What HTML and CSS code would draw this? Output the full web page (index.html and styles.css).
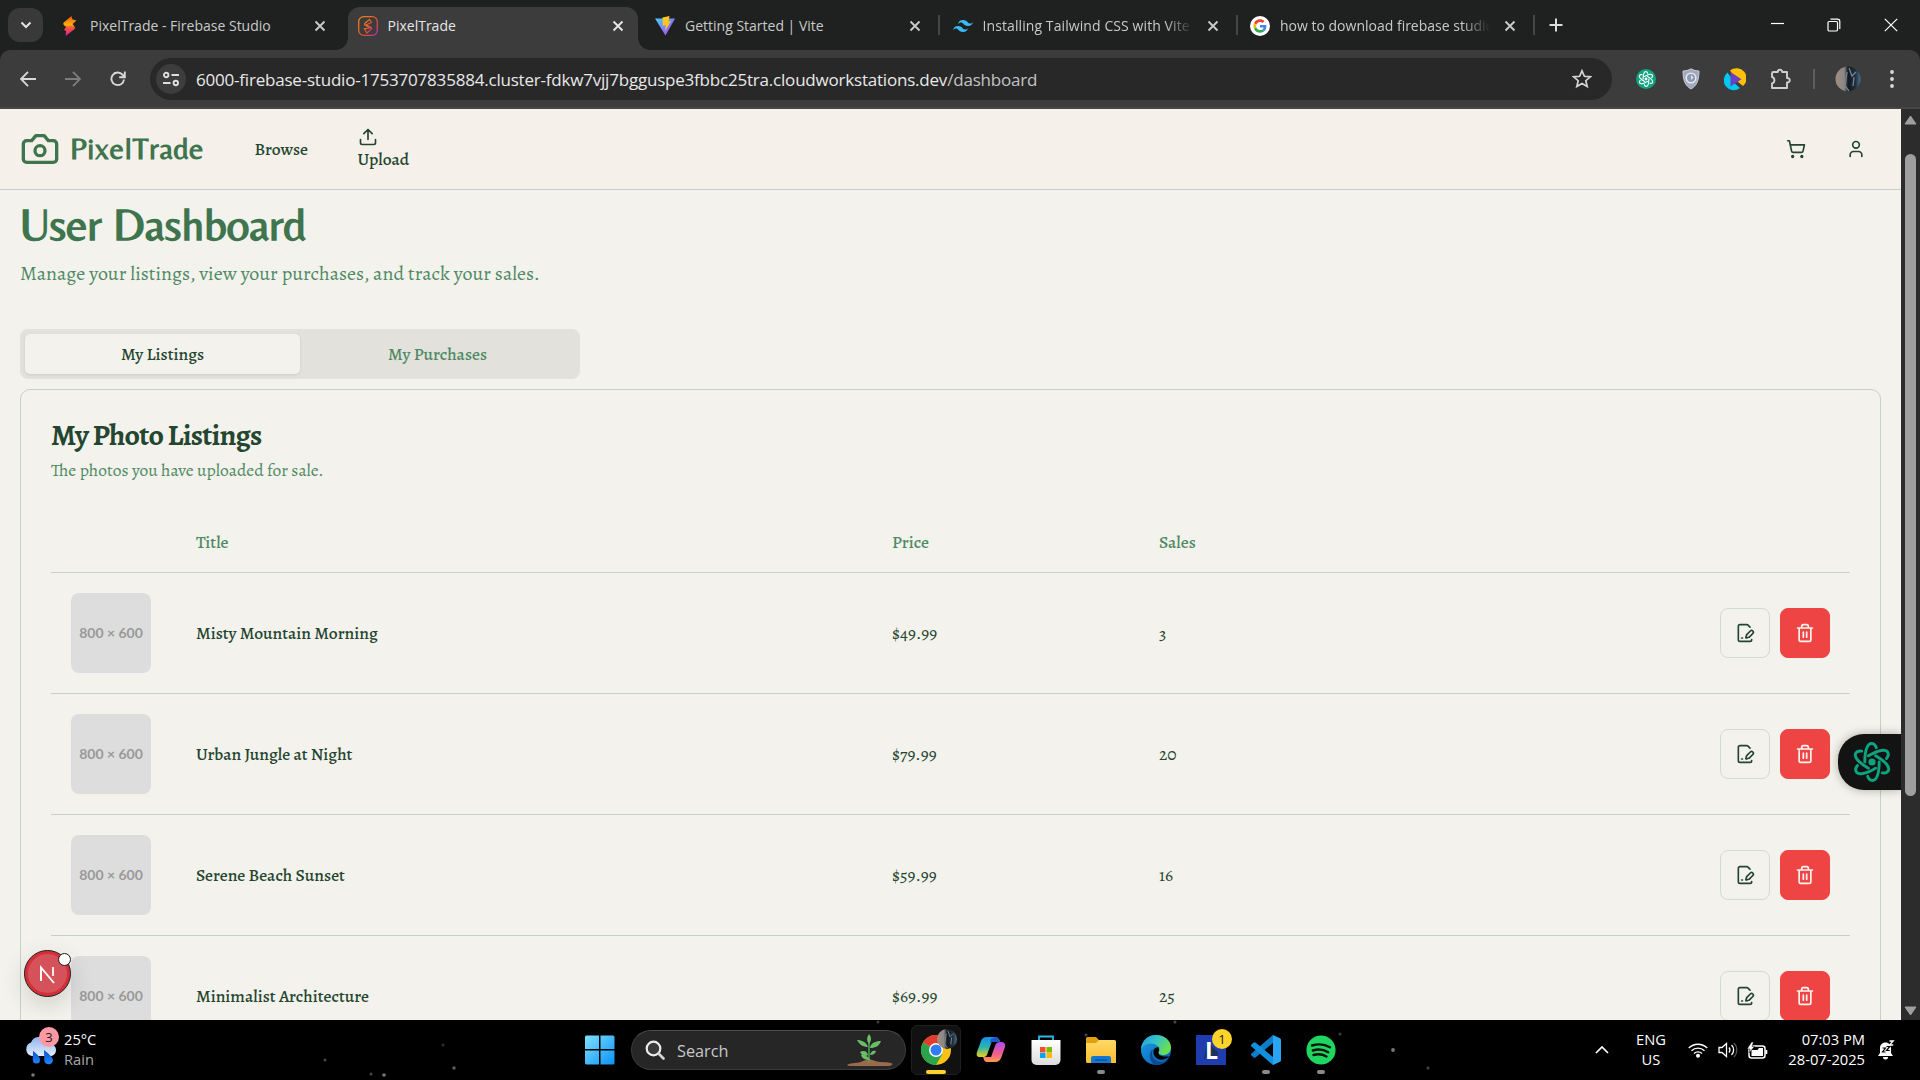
FILE: index.html
```html
<!DOCTYPE html>
<html lang="en">
<head>
<meta charset="utf-8">
<title>PixelTrade</title>
<link rel="stylesheet" href="styles.css">
</head>
<body>
<svg class="defs" width="0" height="0" aria-hidden="true">
  <defs>
    <linearGradient id="fire" x1="0" y1="0" x2="0" y2="1"><stop offset="0" stop-color="#f4511e"/><stop offset=".45" stop-color="#ffb300"/><stop offset=".55" stop-color="#ff5a36"/><stop offset="1" stop-color="#d81b9a"/></linearGradient>
    <linearGradient id="ring" x1="0" y1="0" x2="1" y2="1"><stop offset="0" stop-color="#f08a1c"/><stop offset=".6" stop-color="#e0502d"/><stop offset="1" stop-color="#c02fb0"/></linearGradient>
    <linearGradient id="viteA" x1="0" y1="0" x2="1" y2="1"><stop offset="0" stop-color="#41d1ff"/><stop offset="1" stop-color="#bd34fe"/></linearGradient>
    <linearGradient id="win" x1="0" y1="0" x2="1" y2="1"><stop offset="0" stop-color="#7fe0ff"/><stop offset="1" stop-color="#0a93f5"/></linearGradient>
    <linearGradient id="cloud" x1="0" y1="0" x2="0" y2="1"><stop offset="0" stop-color="#8fb4f0"/><stop offset="1" stop-color="#e3ecfb"/></linearGradient>
    <linearGradient id="drop" x1="0" y1="0" x2="0" y2="1"><stop offset="0" stop-color="#0b4fd0"/><stop offset="1" stop-color="#1e86ff"/></linearGradient>
    <linearGradient id="copA" x1="0" y1="0" x2="0" y2="1"><stop offset="0" stop-color="#1a8fe8"/><stop offset=".5" stop-color="#27b5b0"/><stop offset="1" stop-color="#f2cf1f"/></linearGradient>
    <linearGradient id="copB" x1="0" y1="0" x2="0" y2="1"><stop offset="0" stop-color="#b04bf0"/><stop offset=".6" stop-color="#f0608a"/><stop offset="1" stop-color="#ff9a4d"/></linearGradient>
    <linearGradient id="folder" x1="0" y1="0" x2="0" y2="1"><stop offset="0" stop-color="#ffd967"/><stop offset="1" stop-color="#fdbf2d"/></linearGradient>
    <linearGradient id="edgeA" x1="0" y1="0" x2="1" y2=".5"><stop offset="0" stop-color="#1b9de2"/><stop offset=".5" stop-color="#35c1c9"/><stop offset="1" stop-color="#6be04c"/></linearGradient>
    <linearGradient id="edgeB" x1="0" y1="0" x2="1" y2="1"><stop offset="0" stop-color="#1aa0e8"/><stop offset="1" stop-color="#0b57b0"/></linearGradient>
    <linearGradient id="store" x1="0" y1="0" x2="0" y2="1"><stop offset="0" stop-color="#fff"/><stop offset="1" stop-color="#dcdcdc"/></linearGradient>
    <linearGradient id="face" x1="0" y1="0" x2="1" y2="0"><stop offset="0" stop-color="#a08d80"/><stop offset=".35" stop-color="#8b8784"/><stop offset=".5" stop-color="#15181c"/><stop offset=".8" stop-color="#22303c"/><stop offset="1" stop-color="#4d7394"/></linearGradient>
    <symbol id="close" viewBox="0 0 12 12"><path d="M1.5 1.5l9 9M10.500 1.500l-9 9" fill="none" stroke="currentColor" stroke-width="1.9"/></symbol>
    <symbol id="edit" viewBox="0 0 24 24"><path d="m18 5-2.414-2.414A2 2 0 0 0 14.172 2H6a2 2 0 0 0-2 2v16a2 2 0 0 0 2 2h12a2 2 0 0 0 2-2"/><path d="M21.378 12.626a1 1 0 0 0-3.004-3.004l-4.010 4.012a2 2 0 0 0-.506.854l-.837 2.870a.5.5 0 0 0 .620.620l2.870-.837a2 2 0 0 0 .854-.506z"/><path d="M8 18h1"/></symbol>
    <symbol id="trash" viewBox="0 0 24 24"><path d="M3 6h18M19 6v14c0 1-1 2-2 2H7c-1 0-2-1-2-2V6M8 6V4c0-1 1-2 2-2h4c1 0 2 1 2 2v2M10 11v6M14 11v6"/></symbol>
    <symbol id="atom" viewBox="0 0 40 40">
      <g fill="none" stroke="currentColor" stroke-width="2.9" stroke-linecap="round">
        <g id="petal"><path d="M12.800 20C12.800 8 15.500 1.500 19.500 1.500c2.300 0 3.900 1.600 4.800 4.200"/></g>
        <use href="#petal" transform="rotate(60 20 20)"/><use href="#petal" transform="rotate(120 20 20)"/><use href="#petal" transform="rotate(180 20 20)"/><use href="#petal" transform="rotate(240 20 20)"/><use href="#petal" transform="rotate(300 20 20)"/>
      </g><circle cx="20" cy="20" r="3.600" fill="currentColor"/></symbol>
  </defs>
</svg>

<div class="screen">
  <div class="tabstrip">
    <div class="tabsearch"><svg width="12" height="8" viewBox="0 0 12 8"><path d="M1.500 1.500L6 6l4.500-4.500" fill="none" stroke="#e3e3e3" stroke-width="2"/></svg></div>
    <div class="tab">
      <svg class="fav" viewBox="0 0 20 20"><path d="M11.500 0L4 6.200c-.8.700-.9 2-.2 2.800L6 11l-2 3 2 1-.3 5 8.300-6.500c1.200-1 1.300-2 .5-3L12.500 8l4-3.500-4.200-1.300z" fill="url(#fire)"/></svg>
      <span class="tabname">PixelTrade - Firebase Studio</span><svg class="x"><use href="#close"/></svg>
    </div>
    <div class="tab on">
      <svg class="fav" viewBox="0 0 20 20"><rect x=".7" y=".7" width="18.600" height="18.600" rx="5" fill="none" stroke="url(#ring)" stroke-width="1.300"/><path d="M11.500 3.500L7 7.300c-.6.600-.6 1.200 0 1.700l5 3-5.500.8L9 17l4-3.600c.7-.7.700-1.600 0-2.200L8 9l5.500-2.500z" fill="none" stroke="url(#ring)" stroke-width="1.200"/></svg>
      <span class="tabname">PixelTrade</span><svg class="x"><use href="#close"/></svg>
    </div>
    <div class="tab sep">
      <svg class="fav" viewBox="0 0 20 20"><path d="M0 2.500L20 2.500 10.500 19.500z" fill="url(#viteA)"/><path d="M7.500 1.500L14.500 0l-1 5.500 2.500-.5-6 10 .8-6-3 .7z" fill="#ffc61c"/></svg>
      <span class="tabname">Getting Started | Vite</span><svg class="x"><use href="#close"/></svg>
    </div>
    <div class="tab sep">
      <svg class="fav" viewBox="0 0 20 20"><path d="M5 8c.7-2.700 2.300-4 5-4 4 0 4.500 3 6.500 3.500 1.300.3 2.500-.2 3.500-1.500-.7 2.700-2.300 4-5 4-4 0-4.500-3-6.500-3.500C7.200 6.200 6 6.700 5 8zM0 14c.7-2.700 2.300-4 5-4 4 0 4.500 3 6.500 3.500 1.300.3 2.500-.2 3.500-1.500-.7 2.700-2.300 4-5 4-4 0-4.500-3-6.500-3.500C2.200 12.200 1 12.700 0 14z" fill="#38bdf8"/></svg>
      <span class="tabname fade wide">Installing Tailwind CSS with Vite</span><svg class="x"><use href="#close"/></svg>
    </div>
    <div class="tab sep">
      <svg class="fav" viewBox="-12 -12 72 72"><circle cx="24" cy="24" r="36" fill="#fff"/><path fill="#EA4335" d="M24 9.500c3.540 0 6.710 1.220 9.210 3.600l6.850-6.850C35.900 2.380 30.470 0 24 0 14.620 0 6.510 5.380 2.560 13.220l7.980 6.190C12.430 13.720 17.740 9.500 24 9.500z"/><path fill="#4285F4" d="M46.980 24.550c0-1.570-.15-3.090-.38-4.550H24v9.020h12.940c-.58 2.960-2.260 5.480-4.780 7.180l7.730 6c4.510-4.180 7.090-10.360 7.090-17.650z"/><path fill="#FBBC05" d="M10.530 28.590c-.48-1.450-.76-2.990-.76-4.590s.27-3.140.76-4.590l-7.980-6.190C.92 16.460 0 20.120 0 24c0 3.880.92 7.540 2.560 10.780l7.970-6.190z"/><path fill="#34A853" d="M24 48c6.480 0 11.930-2.130 15.890-5.810l-7.730-6c-2.150 1.450-4.920 2.300-8.160 2.300-6.260 0-11.570-4.220-13.470-9.910l-7.980 6.190C6.510 42.620 14.620 48 24 48z"/></svg>
      <span class="tabname fade">how to download firebase studio</span><svg class="x"><use href="#close"/></svg>
    </div>
    <svg class="plus" width="14" height="14" viewBox="0 0 14 14"><path d="M7 .5v13M.5 7h13" stroke="#dcdcdc" stroke-width="2"/></svg>
    <div class="wincontrols">
      <svg width="14" height="14" viewBox="0 0 14 14"><path d="M1 5.500h13" stroke="#fff" stroke-width="1.200"/></svg>
      <svg width="14" height="14" viewBox="0 0 14 14"><rect x="1" y="3.500" width="9.500" height="9.500" rx="1.200" fill="none" stroke="#fff" stroke-width="1.200"/><path d="M3.500 1.200h7a2.300 2.300 0 0 1 2.300 2.300V11" fill="none" stroke="#fff" stroke-width="1.200"/></svg>
      <svg width="14" height="14" viewBox="0 0 14 14"><path d="M.8.8l12.400 12.400M13.200.8L.8 13.200" stroke="#fff" stroke-width="1.200"/></svg>
    </div>
  </div>

  <div class="toolbar">
    <div class="nav">
      <svg width="16" height="16" viewBox="0 0 16 16"><path d="M8 .8L1 8l7 7.200M1 8h15" fill="none" stroke="#d8d8d8" stroke-width="1.900"/></svg>
      <svg width="16" height="16" viewBox="0 0 16 16"><path d="M8 .8L15 8l-7 7.200M15 8H0" fill="none" stroke="#7c7c7c" stroke-width="1.900"/></svg>
      <svg width="16" height="16" viewBox="0 0 16 16"><path d="M14 8.500A6.300 6.300 0 1 1 12.500 3.700L14.500 6M14.800.5V6.300H9.200" fill="none" stroke="#d8d8d8" stroke-width="1.900"/></svg>
    </div>
    <div class="omnibox">
      <div class="chip"><svg width="16" height="16" viewBox="0 0 16 16" fill="none" stroke="#dedede" stroke-width="1.900"><circle cx="3.200" cy="4" r="2.200"/><path d="M8.500 4H16M0 12h7.500"/><circle cx="12.800" cy="12" r="2.200"/></svg></div>
      <span class="url">6000-firebase-studio-1753707835884.cluster-fdkw7vjj7bgguspe3fbbc25tra.cloudworkstations.dev<i>/dashboard</i></span>
      <svg class="star" width="20" height="20" viewBox="0 0 20 20"><path d="M10 1.800l2.400 5.500 6 .5-4.600 3.900 1.400 5.900L10 14.500l-5.200 3.100 1.400-5.900L1.600 7.800l6-.5z" fill="none" stroke="#d4d4d4" stroke-width="1.700"/></svg>
    </div>
    <div class="exts">
      <div class="gpt"><svg width="16" height="16"><use href="#atom"/></svg></div>
      <svg class="shield" width="20" height="22" viewBox="0 0 20 22"><path d="M10 .8c2.500 1.500 5 2 8 2.200 0 9-2 14.500-8 18C4 17.500 2 12 2 3c3-.2 5.500-.7 8-2.200z" fill="#a3a9bb" stroke="#c5cad8"/><circle cx="10" cy="10" r="4.800" fill="#8e98b2" stroke="#e4e8f0" stroke-width="1.600"/><path d="M10 7l2.500 2.500L10 12z" fill="#dfe4ee"/></svg>
      <svg class="player" width="22" height="24" viewBox="0 0 22 24"><path d="M6 3.500A9.800 9.800 0 1 1 19 19L14 15z" fill="#ffc107"/><path d="M3.500 5.500A9.800 9.800 0 1 0 16 21L11 16.500 6 9z" fill="#00c8f0"/><path d="M6.500 5l11 7.200-11 7.300z" fill="#6a3fc0"/></svg>
      <svg class="puzzle" width="22" height="24" viewBox="0 0 22 24"><path d="M3.500 5h4.300a2.200 2.200 0 1 1 4.400 0H17v6a2.300 2.300 0 1 1 0 4.500V21H2v-4.500a3.400 3.400 0 0 0 0-6.500V6.500A1.500 1.500 0 0 1 3.500 5z" fill="none" stroke="#d0d0d0" stroke-width="1.900" stroke-linejoin="round"/></svg>
      <div class="bar"></div>
      <svg class="avatar" width="26" height="26" viewBox="0 0 26 26"><circle cx="13" cy="13" r="12.500" fill="url(#face)"/><path d="M14 2l3 8 4-4M12 6l-2 14 4 5M19 11l-1 9" stroke="#6f8598" stroke-width="1.300" fill="none"/></svg>
      <svg class="dots" width="6" height="20" viewBox="0 0 6 20" fill="#dadada"><circle cx="3" cy="3" r="1.900"/><circle cx="3" cy="10" r="1.900"/><circle cx="3" cy="17" r="1.900"/></svg>
    </div>
  </div>

  <div class="viewport">
    <div class="page">
      <header class="site">
        <svg class="camera" width="40" height="40" viewBox="0 0 24 24"><path d="M14.500 4h-5L7 7H4a2 2 0 0 0-2 2v9a2 2 0 0 0 2 2h16a2 2 0 0 0 2-2V9a2 2 0 0 0-2-2h-3l-2.500-3z"/><circle cx="12" cy="13" r="3"/></svg>
        <span class="brand">PixelTrade</span>
        <a class="link browse">Browse</a>
        <a class="link upload"><svg width="20" height="20" viewBox="0 0 24 24"><path d="M21 15v4a2 2 0 0 1-2 2H5a2 2 0 0 1-2-2v-4M17 8l-5-5-5 5M12 3v12"/></svg><span>Upload</span></a>
        <div class="account">
          <svg width="20" height="20" viewBox="0 0 24 24"><circle cx="8" cy="21" r="1"/><circle cx="19" cy="21" r="1"/><path d="M2.050 2.050h2l2.660 12.420a2 2 0 0 0 2 1.580h9.780a2 2 0 0 0 1.950-1.570l1.650-7.430H5.120"/></svg>
          <svg width="20" height="20" viewBox="0 0 24 24"><path d="M19 21v-2a4 4 0 0 0-4-4H9a4 4 0 0 0-4 4v2"/><circle cx="12" cy="7" r="4"/></svg>
        </div>
      </header>
      <main>
        <h1>User Dashboard</h1>
        <p class="lead">Manage your listings, view your purchases, and track your sales.</p>
        <div class="segments"><span class="seg active">My Listings</span><span class="seg">My Purchases</span></div>
        <section class="card">
          <h2>My Photo Listings</h2>
          <p class="sub">The photos you have uploaded for sale.</p>
          <div class="row head"><span></span><span>Title</span><span>Price</span><span>Sales</span><span></span></div>
          <div class="row"><div class="thumb">800 × 600</div><span class="name">Misty Mountain Morning</span><span class="num">$49.99</span><span class="num">3</span><div class="actions"><button class="btn"><svg><use href="#edit"/></svg></button><button class="btn del"><svg><use href="#trash"/></svg></button></div></div>
          <div class="row"><div class="thumb">800 × 600</div><span class="name">Urban Jungle at Night</span><span class="num">$79.99</span><span class="num">20</span><div class="actions"><button class="btn"><svg><use href="#edit"/></svg></button><button class="btn del"><svg><use href="#trash"/></svg></button></div></div>
          <div class="row"><div class="thumb">800 × 600</div><span class="name">Serene Beach Sunset</span><span class="num">$59.99</span><span class="num">16</span><div class="actions"><button class="btn"><svg><use href="#edit"/></svg></button><button class="btn del"><svg><use href="#trash"/></svg></button></div></div>
          <div class="row"><div class="thumb">800 × 600</div><span class="name">Minimalist Architecture</span><span class="num">$69.99</span><span class="num">25</span><div class="actions"><button class="btn"><svg><use href="#edit"/></svg></button><button class="btn del"><svg><use href="#trash"/></svg></button></div></div>
        </section>
      </main>
      <div class="helper"><svg width="40" height="42"><use href="#atom"/></svg></div>
      <div class="devbadge"><svg width="20" height="20" viewBox="0 0 20 20"><path d="M3 17V3.500L16 19" fill="none" stroke="#fff" stroke-width="1.900"/><path d="M15 3v9" stroke="#fff" stroke-width="1.700"/></svg><i></i></div>
    </div>
    <div class="scrollbar">
      <svg width="13" height="10" viewBox="0 0 13 10"><path d="M6.500 1L12 9H1z" fill="#9f9f9f" stroke="#9f9f9f" stroke-linejoin="round"/></svg>
      <div class="thumbbar"></div>
      <svg width="13" height="10" viewBox="0 0 13 10"><path d="M6.500 9L12 1H1z" fill="#9f9f9f" stroke="#9f9f9f" stroke-linejoin="round"/></svg>
    </div>
  </div>

  <footer class="taskbar">
    <svg class="stars" width="1920" height="60" viewBox="0 0 1920 60" fill="#777"><circle cx="33" cy="55" r="1.800"/><circle cx="325" cy="40" r="1.500" opacity=".6"/><circle cx="371" cy="54" r="1.500" opacity=".6"/><circle cx="384" cy="55" r="1.800"/><circle cx="443" cy="25" r="1.500" opacity=".4"/><circle cx="454" cy="48" r="1.700" opacity=".8"/><circle cx="878" cy="2" r="1.500" opacity=".5"/><circle cx="1086" cy="15" r="1.500" opacity=".6"/><circle cx="1175" cy="2" r="1.500" opacity=".6"/><circle cx="1340" cy="14" r="1.600" opacity=".5"/><circle cx="1393" cy="30" r="1.900"/><circle cx="1428" cy="48" r="1.500" opacity=".6"/></svg>
    <div class="weather">
      <svg width="36" height="40" viewBox="0 0 36 40"><path d="M8 27a7 7 0 0 1-1-13.500C9 9 12 7.500 17 8c6 .5 8 4 9 7 5 .5 6 4 6 6 0 4-3 6-6 6z" fill="url(#cloud)"/><path d="M9 22c4 3 7 5.500 7 9a3.600 3.600 0 0 1-7.200 0zM20 21c5 4 9 7 9 10.500a4.400 4.400 0 0 1-8.700 0z" fill="url(#drop)"/></svg>
      <i class="pill">3</i>
      <div><span class="deg">25°C</span><span class="rain">Rain</span></div>
    </div>
    <div class="dock">
      <div class="app start"><svg width="30" height="30" viewBox="0 0 30 30" fill="url(#win)"><path d="M0 2a1.500 1.500 0 0 1 1.500-1.500H14V14H0zM15.500.5H28a1.500 1.500 0 0 1 1.500 1.500V14h-14zM0 15.500h14v14H1.500A1.500 1.500 0 0 1 0 28zM15.500 15.500h14V28a1.500 1.500 0 0 1-1.500 1.500H15.500z"/></svg></div>
      <div class="search">
        <svg width="20" height="20" viewBox="0 0 20 20"><circle cx="8.500" cy="8.500" r="6.800" fill="#3a3a3a" stroke="#ececec" stroke-width="2.200"/><path d="M13.500 13.500l5 5" stroke="#d5d5d5" stroke-width="2.600" stroke-linecap="round"/></svg>
        <span>Search</span>
        <svg class="plant" width="48" height="34" viewBox="0 0 48 34"><path d="M1 32c5-3 10-1 16-4 5-2 8-2 12 0 6 2 12 0 18 3l-3 2H3z" fill="#9a6a4c"/><path d="M23 29V10" stroke="#4f9e58" stroke-width="1.600"/><path d="M23 11c-3-4-2-7 0-10 2.500 3 3 6 0 10zM22 14c-5 0-8-2-11-7 5 0 9 2 11 7zM24 15c1-5 5-7 11-7-2 5-5 7-11 7zM22 22c-3 2-6 1-8-3 4-2 7-1 8 3zM24 22c1-4 3-5 6-4-1 3-3 4-6 4zM24 27c-4 0-8-1-9-5 4 0 7 1 9 5z" fill="#69bf68"/></svg>
      </div>
      <div class="app current"><svg width="30" height="30" viewBox="0 0 30 30"><circle cx="15" cy="15" r="15" fill="#fbc116"/><path d="M15 15L2 7.500a15 15 0 0 1 26 0z" fill="#e33b2e"/><path d="M15 15L2 7.500A15 15 0 0 0 15 30l6.500-11.200z" fill="#2ba24c"/><path d="M15 8.200H28.300A15 15 0 0 0 15 0z" fill="#e33b2e"/><circle cx="15" cy="15" r="7" fill="#fff"/><circle cx="15" cy="15" r="5.500" fill="#2f7df0"/></svg><svg class="mini" width="20" height="20" viewBox="0 0 26 26"><circle cx="13" cy="13" r="13" fill="url(#face)"/><path d="M14 2l3 8 4-4M12 6l-2 14 4 5M19 11l-1 9" stroke="#6f8598" stroke-width="1.300" fill="none"/></svg><u></u></div>
      <div class="app"><svg width="30" height="30" viewBox="0 0 30 30"><path d="M11 2h8c3 0 4 2 5 4H16l-4 11c-1 4-2 5-5 5H4c-3 0-4-2-3-5L5 6c1-3 3-4 6-4z" fill="url(#copA)"/><path d="M19 2c3 0 4 2 5 5h-8l-2 1 1-4z" fill="#1f55c8"/><path d="M19 27h-8c-3 0-3-3-4-5h8l4-11c1-3 2-4 5-4h1c3 0 5 2 4 5l-3.500 10c-1 3-3 5-6.500 5z" fill="url(#copB)"/></svg></div>
      <div class="app"><svg width="30" height="30" viewBox="0 0 30 30"><path d="M8 6V1.500h14V6" fill="none" stroke="#2fb8e8" stroke-width="1.800"/><path d="M.5 5h29v20a5 5 0 0 1-5 5h-19a5 5 0 0 1-5-5z" fill="url(#store)"/><path d="M9 12h5.500v5.500H9z" fill="#f25022"/><path d="M15.500 12H21v5.500h-5.500z" fill="#7fba00"/><path d="M9 18h5.500v5H9z" fill="#00a4ef"/><path d="M15.500 18H21v5h-5.500z" fill="#ffb900"/></svg></div>
      <div class="app run"><svg width="30" height="30" viewBox="0 0 30 30"><path d="M0 3.500A1.500 1.500 0 0 1 1.500 2H10l3 3v5H0z" fill="#e0a010"/><path d="M0 8h10l3-3h15.500A1.500 1.500 0 0 1 30 6.500V28H1.500A1.500 1.500 0 0 1 0 26.500z" fill="url(#folder)"/><path d="M5 28v-5a2 2 0 0 1 2-2h16a2 2 0 0 1 2 2v5z" fill="#1577cf"/><path d="M9 25h12" stroke="#0c4f99" stroke-width="1.300"/></svg><u></u></div>
      <div class="app"><svg width="30" height="30" viewBox="0 0 30 30"><circle cx="15" cy="15" r="15" fill="url(#edgeB)"/><path d="M0 14C1 5 7 0 15 0c9 0 15 6 15 12.500 0 5-4 7.500-8 7.500-3.500 0-5-1.500-4.500-3 1-1.500 1-3 0-5C14 7 5 7 0 14z" fill="url(#edgeA)"/><path d="M12 14c-3 7 2 13 9 13 3 0 5-1 6.500-2.500C25 28 20 30 15.500 30 8 29 7 17 12 14z" fill="#0d4a94"/><path d="M17.500 12c1 2 1 3.500 0 5-.5 2 1.500 4.500 6.500 4.500h4.500C25 24.500 20 25.500 17 24c-5-2.500-6-8-3-11z" fill="#000"/></svg></div>
      <div class="app"><svg width="30" height="30" viewBox="0 0 30 30"><path d="M0 0h30v30H0z" fill="#1f3db0"/><path d="M8 24l3-3h11v-4l-11-10z" fill="#16345c"/></svg><b class="ell">L</b><i class="count">1</i></div>
      <div class="app run"><svg width="30" height="30" viewBox="0 0 30 30"><path d="M22 0l7 3.200a2 2 0 0 1 1 1.800v20a2 2 0 0 1-1 1.800L22 30z" fill="#2aa5f3"/><path d="M22 0v8L4.500 22.500a1.500 1.500 0 0 1-1.800 0L.5 20.500a1.300 1.300 0 0 1 0-2z" fill="#0f7cc8"/><path d="M22 30v-8L4.500 7.500a1.500 1.500 0 0 0-1.800 0L.5 9.500a1.300 1.300 0 0 0 0 2z" fill="#1290dd"/></svg><u></u></div>
      <div class="app run"><svg width="30" height="30" viewBox="0 0 30 30"><circle cx="15" cy="15" r="14.600" fill="#1fd760"/><path d="M6 10.500c6-1.800 13-1.200 18 1.700M6.800 15.500c5-1.500 11-.9 15.400 1.700M7.500 20c4.200-1.200 9-.8 13 1.500" fill="none" stroke="#06140a" stroke-width="2.400" stroke-linecap="round"/></svg><u></u></div>
    </div>
    <div class="tray">
      <svg class="chev" width="14" height="8" viewBox="0 0 14 8"><path d="M1 7l6-6 6 6" fill="none" stroke="#fff" stroke-width="1.700"/></svg>
      <div class="lang"><span>ENG</span><span>US</span></div>
      <svg class="wifi" width="20" height="16" viewBox="0 0 20 16" fill="none" stroke="#fff" stroke-width="1.400"><path d="M.8 6a13 13 0 0 1 18.400 0M3.500 8.800a9.200 9.200 0 0 1 13 0M6 11.500a5.700 5.700 0 0 1 8 0"/><circle cx="10" cy="13.800" r="1.300" fill="#fff"/></svg>
      <svg class="vol" width="21" height="16" viewBox="0 0 21 16" fill="none" stroke="#fff" stroke-width="1.300"><path d="M1 5.500h3L8.500 1.500v13L4 10.500H1z"/><path d="M11 5.500a4 4 0 0 1 0 5M13.500 3a7 7 0 0 1 0 10"/><path d="M16 1a10 10 0 0 1 0 14" stroke="#555"/></svg>
      <svg class="bat" width="21" height="17" viewBox="0 0 21 17"><rect x="2" y="4" width="16" height="12" rx="2.500" fill="none" stroke="#fff" stroke-width="1.500"/><path d="M4.500 8h6l1.500-2h4v8H4.500zM18.500 8h1.800v4h-1.800z" fill="#fff"/><path d="M4.500 0L.2 7H3l-1 4 5.500-6.500H5L6.500 0z" fill="#fff" stroke="#000" stroke-width=".5"/></svg>
      <div class="clock"><span class="time">07:03 PM</span><span class="date">28-07-2025</span></div>
      <svg class="bell" width="18" height="20" viewBox="0 0 18 20"><path d="M1 16l2-3V8.500C3 5 5 2.500 8.500 2.500S14 5 14 8.500V13l2 3zM6 17h5a2.500 2.500 0 0 1-5 0z" fill="#fff"/><path d="M5.500 8h3l-3 4h3M9.500 6.500h3.300l-3.300 4h3.300" fill="none" stroke="#000" stroke-width="1.200"/><path d="M12.500 1h3.700l-3.700 4h3.700" fill="none" stroke="#fff" stroke-width="1.300"/></svg>
    </div>
  </footer>
</div>
</body>
</html>
```
FILE: styles.css
```css
* { box-sizing: border-box; }
body { margin: 0; background: #000; overflow: hidden; }
svg { display: block; flex: none; }
i, u { font-style: normal; text-decoration: none; }
.defs { position: absolute; }
.screen { width: 1920px; height: 1080px; display: flex; flex-direction: column; font-family: "Segoe UI", "Open Sans", sans-serif; overflow: hidden; }

/* browser tabs */
.tabstrip { height: 50px; flex: none; background: #1f2120; display: flex; align-items: flex-start; padding-left: 8px; position: relative; z-index: 1; }
.tabsearch { width: 35px; height: 34px; margin: 8px 7px 0 0; border-radius: 12px; background: #393939; display: flex; align-items: center; justify-content: center; }
.tab { width: 290px; height: 43px; margin: 7px 7.5px 0 0; padding: 0 14px 6px 10px; display: flex; align-items: center; color: #c9c9c9; font-size: 14px; position: relative; flex: none; }
.tab.on { background: #3c3c3c; border-radius: 12px 12px 0 0; color: #e6e6e6; }
.tab.on::before, .tab.on::after { content: ""; position: absolute; bottom: 0; width: 12px; height: 12px; }
.tab.on::before { left: -12px; background: radial-gradient(circle at 0 0, #1f2120 11.500px, #3c3c3c 12px); }
.tab.on::after { right: -12px; background: radial-gradient(circle at 100% 0, #1f2120 11.500px, #3c3c3c 12px); }
.tab.sep::after { content: ""; position: absolute; right: -5px; top: 8px; width: 2px; height: 20px; background: #454646; }
.fav { width: 20px; height: 20px; margin-right: 10px; }
.tabname { white-space: nowrap; width: 218px; overflow: hidden; line-height: 20px; }
.tabname.wide { letter-spacing: .09px; }
.fade { -webkit-mask-image: linear-gradient(90deg, #000 182px, transparent 210px); mask-image: linear-gradient(90deg, #000 182px, transparent 210px); }
.x { width: 12px; height: 12px; margin-left: auto; }
.plus { margin: 18px 0 0 11px; }
.wincontrols { margin: 18px 22px 0 auto; display: flex; gap: 43px; }

/* toolbar */
.toolbar { height: 59px; flex: none; background: #3c3c3c; display: flex; align-items: center; border-bottom: 2px solid #474747; box-shadow: 0 -10px 0 #1f2120; border-radius: 10px 10px 0 0; }
.nav { display: flex; gap: 29px; width: 150px; padding-left: 20px; }
.omnibox { width: 1462px; height: 42px; border-radius: 21px; background: #282828; display: flex; align-items: center; padding: 0 20px 0 6px; margin-top: 1px; }
.chip { width: 30px; height: 30px; border-radius: 50%; background: #3d3d3d; display: flex; align-items: center; justify-content: center; margin-right: 10px; }
.url { color: #e8e8e8; font-size: 17px; letter-spacing: -.205px; white-space: nowrap; }
.url i { color: #c4c4c4; }
.star { margin-left: auto; }
.exts { display: flex; align-items: center; padding-left: 23.500px; }
.gpt { width: 20px; height: 20px; border-radius: 50%; background: #10a37f; color: #fff; display: flex; align-items: center; justify-content: center; }
.shield { margin-left: 25px; }
.player { margin-left: 23px; }
.puzzle { margin-left: 24.500px; }
.bar { width: 2px; height: 20px; background: #5e5e5e; margin: 0 20.500px 0 20.500px; }
.dots { margin-left: 28px; }

/* page */
.viewport { height: 911px; flex: none; display: flex; overflow: hidden; }
.page { width: 1901px; background: #f3f2ec; position: relative; overflow: hidden; font-family: Alegreya, "Liberation Serif", serif; color: #24452f; }
.site { height: 81px; background: #f5f1ea; border-bottom: 1px solid #c6d0c8; display: flex; align-items: center; padding: 0 35px 0 20px; }
.site svg { fill: none; stroke: #24452f; stroke-width: 2; stroke-linecap: round; stroke-linejoin: round; }
.site .camera { stroke: #3f754e; }
.brand { width: 144px; margin: 0 41px 0 10px; font: 700 30px/36px Belleza, "Alegreya Sans", Lato, sans-serif; letter-spacing: .75px; color: #3f754e; white-space: nowrap; }
.link { font-size: 17.500px; line-height: 20px; font-weight: 500; }
.browse { width: 103px; margin-left: -.5px; }
.upload { display: flex; flex-direction: column; gap: 2px; margin-top: -2px; }
.account { margin-left: auto; display: flex; gap: 40px; }
main { padding: 9px 20px 0; }
h1 { margin: 0; height: 50px; font: 700 45px/50px Belleza, "Alegreya Sans", Lato, sans-serif; color: #3f754e; white-space: nowrap; }
.lead { margin: 10px 0 0; padding-top: 1px; font-size: 20px; line-height: 28px; color: #4f8a64; white-space: nowrap; }
.segments { width: 560px; height: 50px; margin-top: 41px; padding: 5px; border-radius: 8px; background: #e2e1dc; display: flex; }
.seg { width: 275px; height: 40px; line-height: 40px; border-radius: 5px; text-align: center; font-size: 17.500px; font-weight: 500; color: #4f8a64; }
.active { background: #f3f2ec; color: #24452f; box-shadow: 0 1px 3px rgba(0, 0, 0, .1); }
.card { margin-top: 10px; height: 720px; border: 1px solid #c6d0c8; border-radius: 10px; padding: 30px 30px 0; }
h2 { margin: 0; font-size: 30px; line-height: 30px; font-weight: 600; letter-spacing: -.77px; white-space: nowrap; }
.sub { margin: 7px 0 0; font-size: 17.500px; line-height: 26px; color: #4f8a64; white-space: nowrap; }
.row { height: 121px; display: grid; grid-template-columns: 125px 696px 267px 1fr auto; align-items: center; padding: 0 20px; border-bottom: 1px solid #c6d0c8; font-size: 17.500px; }
.head { height: 60px; margin-top: 30px; padding-bottom: 2px; color: #4f8a64; font-weight: 500; }
.name { font-weight: 500; }
.thumb { width: 80px; height: 80px; border-radius: 8px; background: #ddd; color: #999; font: 700 14px/80px Lato, sans-serif; text-align: center; }
.actions { display: flex; gap: 10px; }
.btn { width: 50px; height: 50px; border: 1px solid #d2dbd3; border-radius: 8px; background: #f3f2ec; padding: 0; display: flex; align-items: center; justify-content: center; }
.btn svg { width: 20px; height: 20px; fill: none; stroke: #24452f; stroke-width: 2; stroke-linecap: round; stroke-linejoin: round; }
.del { background: #ef4444; border-color: #ef4444; }
.del svg { stroke: #fdf6f0; }
.helper { position: absolute; right: 0; top: 625px; width: 63px; height: 56px; border-radius: 26px 0 0 26px; background: #131313; color: #0da37f; box-shadow: 0 0 10px rgba(0, 0, 0, .3); padding: 7px 0 0 14px; }
.devbadge { position: absolute; left: 24px; top: 841px; width: 47px; height: 47px; border-radius: 50%; background: #d6525a; border: 1px solid #191919; box-shadow: inset 0 0 0 3px #d42f38, 0 8px 24px rgba(0, 0, 0, .15); display: flex; align-items: center; justify-content: center; }
.devbadge i { position: absolute; right: -1px; top: 2px; width: 13px; height: 13px; border-radius: 50%; background: #fff; border: 1.500px solid #191919; }
.scrollbar { width: 19px; background: #2c2c2c; display: flex; flex-direction: column; align-items: center; padding: 6px 0 4px; }
.thumbbar { width: 11px; height: 642px; margin: 29px 0 auto; border-radius: 6px; background: #9f9f9f; }

/* taskbar */
.taskbar { height: 60px; flex: none; background: #000; color: #fff; position: relative; display: flex; align-items: center; font-size: 14.700px; line-height: 20px; }
.stars { position: absolute; left: 0; top: 0; }
.weather { width: 576px; padding-left: 24px; display: flex; gap: 4px; position: relative; }
.weather div, .lang, .clock { display: flex; flex-direction: column; padding-bottom: 2px; }
.pill { position: absolute; left: 39px; top: -2px; width: 20px; height: 20px; border-radius: 50%; background: #ff99a4; color: #222; font-size: 13px; text-align: center; }
.rain { color: #a9a9a9; }
.dock { display: flex; align-items: center; gap: 5px; position: relative; }
.app { width: 50px; height: 50px; display: flex; align-items: center; justify-content: center; position: relative; }
.start { padding-right: 2px; }
.search { width: 275px; height: 40px; border-radius: 20px; background: #262626; border: 1px solid #3a3a3a; border-top-color: #4c4c4c; display: flex; align-items: center; padding: 0 11px 0 13px; color: #c8c8c8; font-size: 16.300px; }
.search span { margin-left: 12px; padding-top: 1px; }
.plant { margin-left: auto; }
.current { background: #111; border: 1px solid #1f1f1f; border-radius: 6px; }
.mini { position: absolute; right: 3px; top: 3px; }
.app u { position: absolute; bottom: 1px; left: 21px; width: 8px; height: 4px; border-radius: 2px; background: #8a8a8a; }
.app.current u { left: 14px; bottom: 0; width: 20px; background: #ffd42a; }
.ell { position: absolute; left: 19px; top: 13px; font-size: 23px; line-height: 24px; }
.count { position: absolute; left: 26px; top: 4px; width: 20px; height: 20px; border-radius: 50%; background: #ffd42a; color: #222; font-size: 13px; text-align: center; }
.tray { margin-left: auto; display: flex; align-items: center; padding-right: 25px; position: relative; }
.lang { width: 50px; text-align: center; margin: 0 12px 0 17px; }
.vol { margin-left: 10px; }
.bat { margin: 0 1px 0 8px; }
.clock { width: 96px; text-align: right; white-space: nowrap; }
.bell { margin-left: 12px; }
```
